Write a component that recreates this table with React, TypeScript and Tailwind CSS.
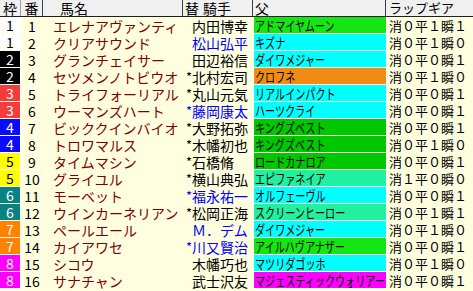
import React from "react";

type Row = {
  f: number;
  n: number;
  name: string;
  mark: string;
  jockey: string;
  blue?: boolean;
  sire: string;
  sc: string;
  gear: string;
};

const rows: Row[] = [
  { f: 1, n: 1, name: "エレナアヴァンティ", mark: "", jockey: "内田博幸", sire: "アドマイヤムーン", sc: "bg-[#14e614]", gear: "消０平１瞬１" },
  { f: 1, n: 2, name: "クリアサウンド", mark: "", jockey: "松山弘平", blue: true, sire: "キズナ", sc: "bg-[#00ffff]", gear: "消０平１瞬０" },
  { f: 2, n: 3, name: "グランチェイサー", mark: "", jockey: "田辺裕信", sire: "ダイワメジャー", sc: "bg-[#00ffff]", gear: "消０平０瞬１" },
  { f: 2, n: 4, name: "セツメンノトビウオ", mark: "*", jockey: "北村宏司", sire: "クロフネ", sc: "bg-[#f08c14]", gear: "消０平１瞬０" },
  { f: 3, n: 5, name: "トライフォーリアル", mark: "*", jockey: "丸山元気", sire: "リアルインパクト", sc: "bg-[#00ffff]", gear: "消０平０瞬１" },
  { f: 3, n: 6, name: "ウーマンズハート", mark: "*", jockey: "藤岡康太", blue: true, sire: "ハーツクライ", sc: "bg-[#00ffff]", gear: "消０平０瞬１" },
  { f: 4, n: 7, name: "ビッククインバイオ", mark: "*", jockey: "大野拓弥", sire: "キングズベスト", sc: "bg-[#00c800]", gear: "消０平０瞬１" },
  { f: 4, n: 8, name: "トロワマルス", mark: "*", jockey: "木幡初也", sire: "キングズベスト", sc: "bg-[#00c800]", gear: "消０平１瞬０" },
  { f: 5, n: 9, name: "タイムマシン", mark: "*", jockey: "石橋脩", sire: "ロードカナロア", sc: "bg-[#00c800]", gear: "消０平０瞬１" },
  { f: 5, n: 10, name: "グライユル", mark: "*", jockey: "横山典弘", sire: "エピファネイア", sc: "bg-[#20f0a0]", gear: "消１平０瞬０" },
  { f: 6, n: 11, name: "モーベット", mark: "*", jockey: "福永祐一", blue: true, sire: "オルフェーヴル", sc: "bg-[#00ffff]", gear: "消０平０瞬１" },
  { f: 6, n: 12, name: "ウインカーネリアン", mark: "*", jockey: "松岡正海", sire: "スクリーンヒーロー", sc: "bg-[#20f0a0]", gear: "消０平１瞬１" },
  { f: 7, n: 13, name: "ペールエール", mark: "", jockey: "Ｍ．デム", blue: true, sire: "ダイワメジャー", sc: "bg-[#00ffff]", gear: "消０平１瞬０" },
  { f: 7, n: 14, name: "カイアワセ", mark: "*", jockey: "川又賢治", blue: true, sire: "アイルハヴアナザー", sc: "bg-[#14e614]", gear: "消０平０瞬１" },
  { f: 8, n: 15, name: "シコウ", mark: "", jockey: "木幡巧也", sire: "マツリダゴッホ", sc: "bg-[#00ffff]", gear: "消０平１瞬０" },
  { f: 8, n: 16, name: "サナチャン", mark: "", jockey: "武士沢友", sire: "マジェスティックウォリアー", sc: "bg-[#ff00ff]", gear: "消０平０瞬１" },
];

const frameStyle: Record<number, string> = {
  1: "bg-white text-black",
  2: "bg-black text-white",
  3: "bg-[#f53c3c] text-white",
  4: "bg-[#0a0aff] text-white",
  5: "bg-[#ffff00] text-black",
  6: "bg-[#0a8282] text-white",
  7: "bg-[#ff8200] text-white",
  8: "bg-[#ff00ff] text-white",
};

const font = "font-['Noto_Sans_CJK_JP','Noto_Sans',sans-serif]";

export default function App() {
  return (
    <div className={`w-[473px] h-[291px] bg-[#ffffe0] overflow-hidden ${font} text-[14px] leading-[16px]`}>
      {/* header */}
      <div className="flex h-[17px] bg-[#f0f0f0] border-b border-[#202020] text-black">
        <div className="w-[21px] h-full flex items-center justify-center border-r border-[#a0a0a0] text-[14px]">枠</div>
        <div className="w-[22px] h-full flex items-center justify-center border-r border-[#404040] text-[14px]">番</div>
        <div className="w-[140px] h-full flex items-center pl-[17px] border-r border-[#404040] text-[14px]">馬名</div>
        <div className="w-[70px] h-full flex items-center pl-[2px] border-r border-[#404040] text-[14px]">
          <span>替</span>
          <span className="ml-[4px]">騎手</span>
        </div>
        <div className="w-[133px] h-full flex items-center pl-[2px] border-r border-[#404040] text-[14px]">父</div>
        <div className="flex-1 h-full flex items-center pl-[3px] text-[13px]">ラップギア</div>
      </div>
      {/* body */}
      {rows.map((r) => (
        <div key={r.n} className="flex h-[17px]">
          <div className={`w-[20px] h-[16px] flex items-center justify-center ${frameStyle[r.f]}`}>{r.f}</div>
          <div className="w-[1px] h-[17px] bg-white" />
          <div className="w-[22px] h-[17px] flex items-center justify-center text-black">{r.n}</div>
          <div className="w-[140px] h-[17px] flex items-center pl-[10px] text-[#800000] whitespace-nowrap">{r.name}</div>
          <div className={`w-[70px] h-[17px] flex items-center whitespace-nowrap ${r.blue ? "text-[#0000ff]" : "text-black"}`}>
            <span className="w-[9px] pl-[3px] text-[13px] inline-block">{r.mark}</span>
            <span>{r.jockey}</span>
          </div>
          <div className="w-[1px] h-[17px] bg-white" />
          <div className={`w-[132px] h-[16px] flex items-center pl-[1px] overflow-hidden ${r.sc}`}>
            <span className="inline-block origin-left scale-x-[0.72] whitespace-nowrap text-black">{r.sire}</span>
          </div>
          <div className="w-[1px] h-[17px] bg-white" />
          <div className="flex-1 h-[17px] flex items-center pl-[2px] text-[13px] text-black whitespace-nowrap">{r.gear}</div>
        </div>
      ))}
    </div>
  );
}
